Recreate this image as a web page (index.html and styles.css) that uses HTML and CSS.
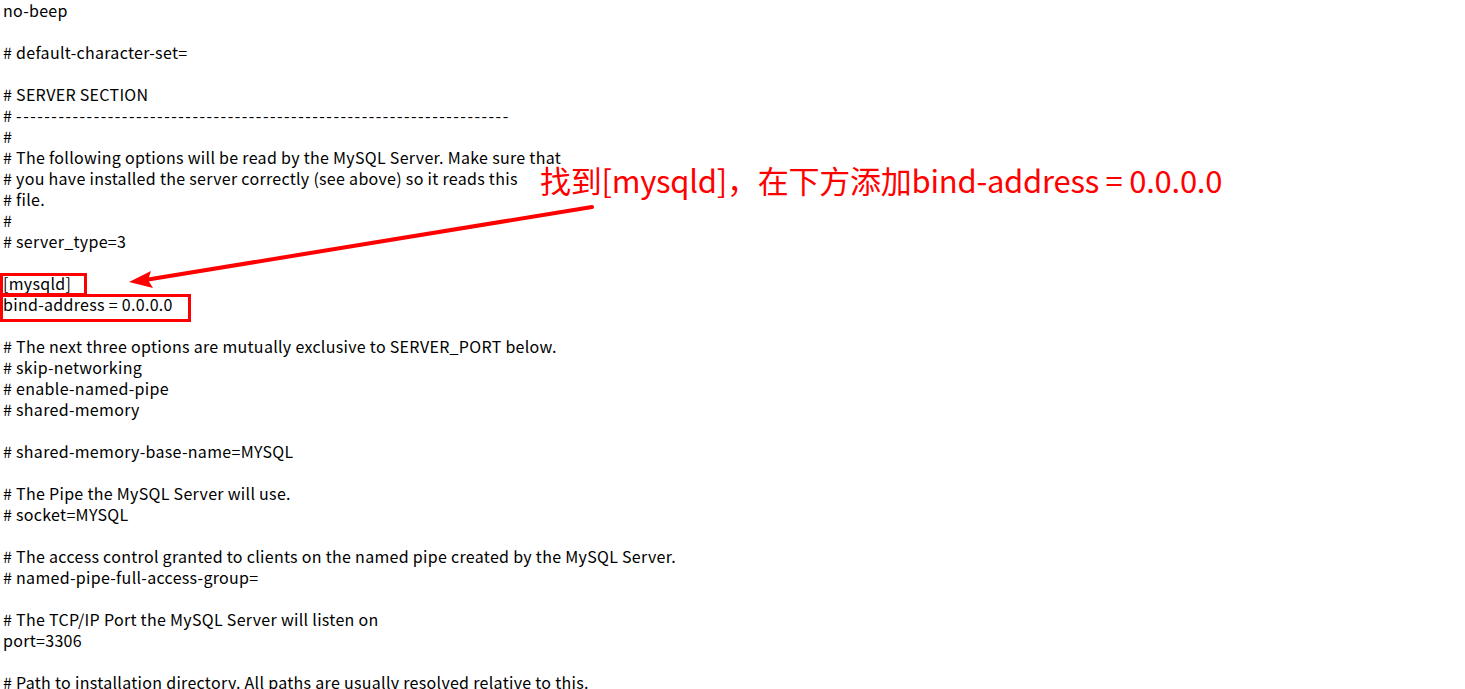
FILE: index.html
```html
<!DOCTYPE html>
<html>
<head>
<meta charset="utf-8">
<link rel="stylesheet" href="styles.css">
</head>
<body>
<div class="page">
<div class="file">no-beep

# default-character-set=

# SERVER SECTION
# <span class="dashes">----------------------------------------------------------------------</span>
#
# The following options will be read by the MySQL Server. Make sure that
# you have installed the server correctly (see above) so it reads this
# file.
#
# server_type=3

[mysqld]
bind-address = 0.0.0.0

# The next three options are mutually exclusive to SERVER_PORT below.
# skip-networking
# enable-named-pipe
# shared-memory

# shared-memory-base-name=MYSQL

# The Pipe the MySQL Server will use.
# socket=MYSQL

# The access control granted to clients on the named pipe created by the MySQL Server.
# named-pipe-full-access-group=

# The TCP/IP Port the MySQL Server will listen on
port=3306

# Path to installation directory. All paths are usually resolved relative to this.</div>
<div class="note">找到[mysqld]，在下方添加bind-address = 0.0.0.0</div>
<svg class="marks" width="1465" height="689" viewBox="0 0 1465 689">
  <rect x="1.5" y="274.5" width="84" height="20" fill="none" stroke="#ff0000" stroke-width="3"/>
  <rect x="1.5" y="295.5" width="188" height="25" fill="none" stroke="#ff0000" stroke-width="3"/>
  <line x1="592" y1="207" x2="145" y2="280" stroke="#ff0000" stroke-width="4" stroke-linecap="round"/>
  <polygon points="129,282 151,271 148,280 153,288" fill="#ff0000"/>
</svg>
</div>
</body>
</html>
```

FILE: styles.css
```css
html, body {
  margin: 0;
  padding: 0;
  background: #ffffff;
}
.page {
  position: relative;
  width: 1465px;
  height: 689px;
  overflow: hidden;
}
.file {
  white-space: pre;
  font-family: "Noto Sans CJK SC", "Open Sans", sans-serif;
  font-size: 16px;
  line-height: 21px;
  letter-spacing: 0.3px;
  color: #000000;
  padding-left: 3px;
}
.dashes {
  letter-spacing: 1.5px;
}
.note {
  position: absolute;
  left: 540px;
  top: 160px;
  font-family: "Noto Sans CJK SC", sans-serif;
  font-size: 31px;
  line-height: 40px;
  letter-spacing: -0.25px;
  color: #ff0000;
  white-space: nowrap;
}
.marks {
  position: absolute;
  left: 0;
  top: 0;
}
```
